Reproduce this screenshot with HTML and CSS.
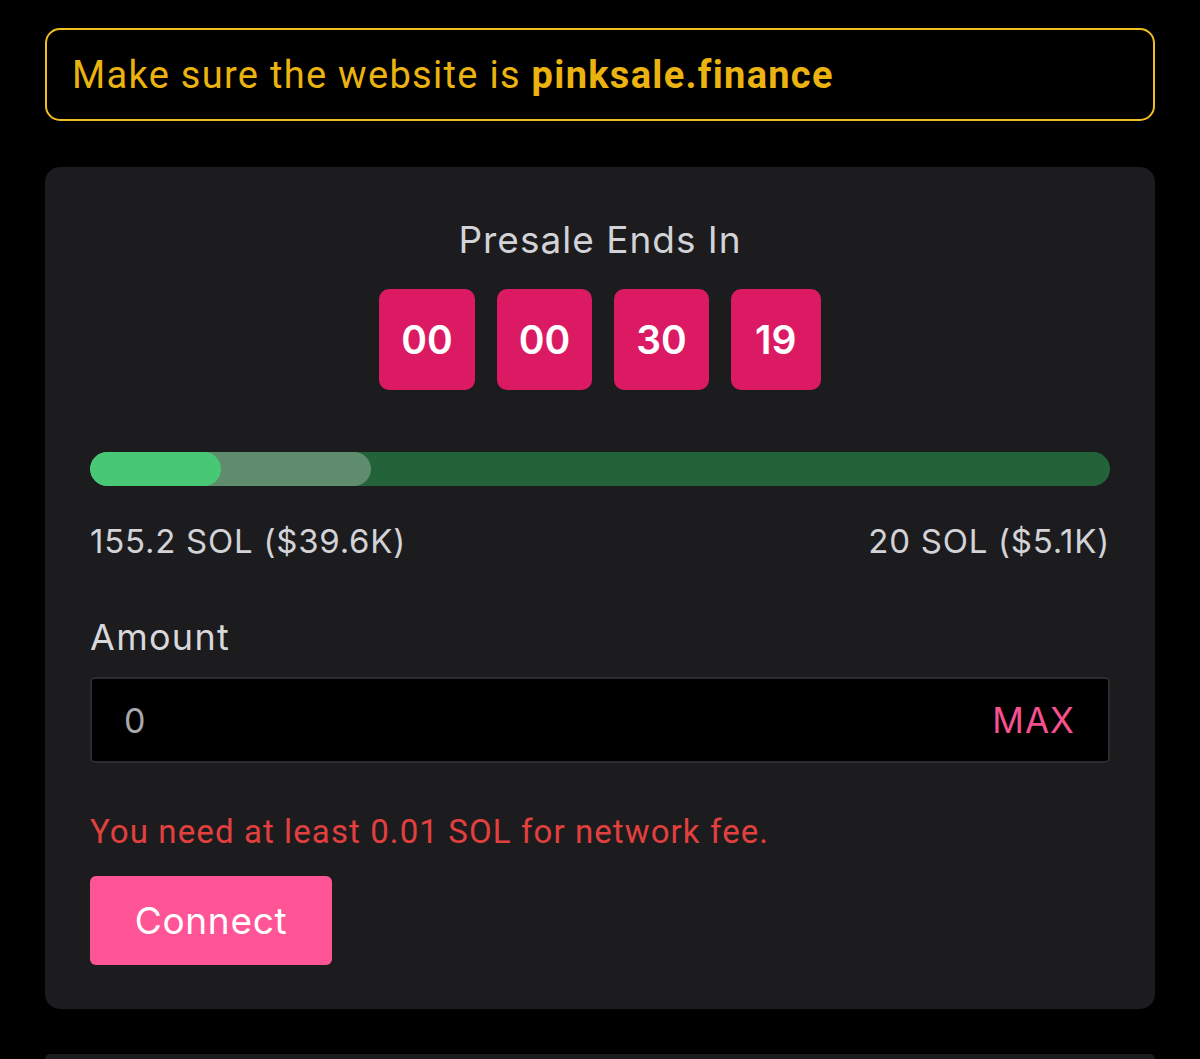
FILE: index.html
```html
<!DOCTYPE html>
<html lang="en">
<head>
<meta charset="utf-8">
<title>Presale</title>
<link rel="stylesheet" href="styles.css">
</head>
<body>
<main class="page">
  <div class="notice">Make sure the website is&nbsp;<strong>pinksale.finance</strong></div>

  <section class="card">
    <h2 class="title">Presale Ends In</h2>
    <div class="countdown">
      <div class="cell">00</div>
      <div class="cell">00</div>
      <div class="cell">30</div>
      <div class="cell">19</div>
    </div>

    <div class="progress">
      <div class="fill-soft" style="width: 27.5%"></div>
      <div class="fill" style="width: 12.8%"></div>
    </div>
    <div class="caps">
      <span>155.2 SOL ($39.6K)</span>
      <span>20 SOL ($5.1K)</span>
    </div>

    <label class="label" for="amount">Amount</label>
    <div class="field">
      <input id="amount" class="input" type="text" placeholder="0">
      <span class="max">MAX</span>
    </div>

    <p class="error">You need at least 0.01 SOL for network fee.</p>

    <button class="btn" type="button">Connect</button>
  </section>

  <section class="card next"></section>
</main>
</body>
</html>
```

FILE: styles.css
```css
* { box-sizing: border-box; }

html, body {
  margin: 0;
  padding: 0;
  background: #000;
}

body {
  font-family: Inter, "Noto Sans", sans-serif;
  color: #d1d1d6;
  overflow: hidden;
  height: 1059px;
}

.page {
  padding: 28px 45px 0;
  display: flex;
  flex-direction: column;
}

.notice {
  height: 93px;
  border: 2.5px solid #f0bf1f;
  border-radius: 15px;
  display: flex;
  align-items: center;
  padding-left: 25px;
  font-family: Roboto, "Liberation Sans", sans-serif;
  font-size: 38px;
  letter-spacing: 1.3px;
  color: #ebb30f;
}

.notice strong {
  font-weight: 700;
}

.card {
  margin-top: 46px;
  background: #1c1c1e;
  border-radius: 15px;
  padding: 51px 45px 44px;
  display: flex;
  flex-direction: column;
}

.title {
  margin: 0;
  font-size: 37px;
  line-height: 44px;
  font-weight: 400;
  letter-spacing: 1px;
  text-align: center;
  color: #d2d2d7;
}

.countdown {
  margin-top: 27px;
  display: flex;
  justify-content: center;
  gap: 22px;
}

.cell {
  height: 101px;
  padding: 0 22px;
  min-width: 90px;
  background: #dc1a64;
  border-radius: 10px;
  display: flex;
  align-items: center;
  justify-content: center;
  color: #fff;
  font-size: 39px;
  font-weight: 600;
}

.progress {
  margin-top: 62px;
  position: relative;
  height: 34px;
  border-radius: 17px;
  background: #236339;
  overflow: hidden;
}

.fill-soft, .fill {
  position: absolute;
  left: 0;
  top: 0;
  bottom: 0;
  border-radius: 17px;
}

.fill-soft { background: #5e8c6d; }
.fill { background: #48c774; }

.caps {
  margin-top: 36px;
  display: flex;
  justify-content: space-between;
  font-size: 33px;
  line-height: 38px;
  letter-spacing: 0.75px;
  color: #d2d2d7;
}

.label {
  margin-top: 55px;
  font-size: 36px;
  line-height: 44px;
  letter-spacing: 1.3px;
  color: #d7d7dc;
}

.field {
  margin-top: 18px;
  height: 86px;
  background: #000;
  border: 2px solid #2c2c2e;
  border-radius: 5px;
  display: flex;
  align-items: center;
  padding: 0 33px 0 32px;
}

.input {
  flex: 1;
  min-width: 0;
  background: transparent;
  border: 0;
  outline: none;
  font-family: inherit;
  font-size: 34px;
  color: #a7a7ad;
  padding: 0;
}

.input::placeholder {
  color: #a7a7ad;
}

.max {
  font-size: 35px;
  letter-spacing: 1px;
  color: #f7508f;
}

.error {
  margin: 49px 0 0;
  font-family: Roboto, "Liberation Sans", sans-serif;
  font-size: 33px;
  line-height: 40px;
  letter-spacing: 1.1px;
  color: #e2403f;
}

.btn {
  margin-top: 24px;
  align-self: flex-start;
  width: 242px;
  height: 89px;
  background: #ff5596;
  border: 0;
  border-radius: 6px;
  color: #fff;
  font-family: inherit;
  font-size: 37px;
  letter-spacing: 0.7px;
  padding: 0;
}

.next {
  height: 5px;
  padding: 0;
  margin-top: 45px;
  border-radius: 15px 15px 0 0;
}
```
